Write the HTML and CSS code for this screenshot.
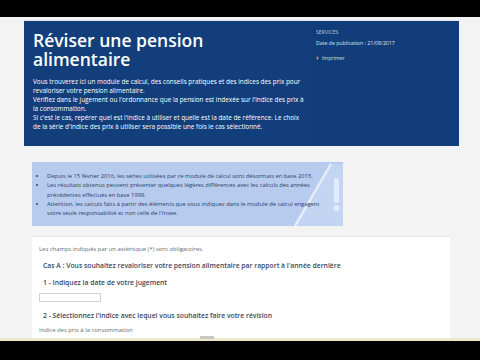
FILE: index.html
```html
<!DOCTYPE html>
<html>
<head>
  <title>Réviser une pension alimentaire</title>
  <link rel="stylesheet" href="styles.css">
</head>
<body>
  <div class="frame">
    <div class="letterbox"></div>
    <div class="page">
      <div class="header">
        <div class="intro">
          <h1>Réviser une pension alimentaire</h1>
          <p>Vous trouverez ici un module de calcul, des conseils pratiques et des indices des prix pour revaloriser votre pension alimentaire.</p>
          <p>Vérifiez dans le jugement ou l'ordonnance que la pension est indexée sur l'indice des prix à la consommation.</p>
          <p>Si c'est le cas, repérer quel est l'indice à utiliser et quelle est la date de référence. Le choix de la série d'indice des prix à utiliser sera possible une fois le cas sélectionné.</p>
        </div>
        <div class="services">
          <div class="services-title">SERVICES</div>
          <div class="services-date">Date de publication : 21/08/2017</div>
          <div class="services-print"><span class="chevron">›</span> Imprimer</div>
        </div>
      </div>

      <div class="notice">
        <ul>
          <li>Depuis le 15 février 2016, les séries utilisées par ce module de calcul sont désormais en base 2015.</li>
          <li>Les résultats obtenus peuvent présenter quelques légères différences avec les calculs des années précédentes effectués en base 1998.</li>
          <li>Attention, les calculs faits à partir des éléments que vous indiquez dans le module de calcul engagent votre seule responsabilité et non celle de l'Insee.</li>
        </ul>
        <svg class="warn" width="60" height="64" viewBox="0 0 60 64">
          <polygon points="12,64 48,2 60,2 60,64" fill="#c3d5f3"/>
          <line x1="12" y1="64" x2="48" y2="2" stroke="#e4ecfa" stroke-width="2.5"/>
          <rect x="51" y="16" width="5" height="25" rx="2" fill="#e4ecfa"/>
          <circle cx="53.5" cy="46" r="3" fill="#e4ecfa"/>
        </svg>
      </div>

      <div class="form">
        <p class="mandatory">Les champs indiqués par un astérisque (*) sont obligatoires.</p>
        <h2>Cas A : Vous souhaitez revaloriser votre pension alimentaire par rapport à l'année dernière</h2>
        <h3>1 - Indiquez la date de votre jugement</h3>
        <input type="text" class="date-input">
        <h3>2 - Sélectionnez l'indice avec lequel vous souhaitez faire votre révision</h3>
        <p class="index-label">Indice des prix à la consommation</p>
      </div>
    </div>
    <div class="progress"><span class="handle"></span></div>
    <div class="letterbox bottom"></div>
  </div>
</body>
</html>
```

FILE: styles.css
```css
body {
  margin: 0;
  background-color: #000;
  font-family: "Open Sans", Arial, sans-serif;
}
.frame {
  width: 480px;
  height: 360px;
  display: flex;
  flex-direction: column;
  overflow: hidden;
}
.letterbox {
  height: 17px;
  background-color: #000;
  flex-shrink: 0;
}
.letterbox.bottom {
  flex: 1;
}
.page {
  height: 321px;
  background-color: #f3f3f4;
  overflow: hidden;
  display: flex;
  flex-direction: column;
  align-items: flex-start;
}
.header {
  margin: 3px 0 0 24px;
  width: 435px;
  height: 126px;
  background-color: #123f7c;
  border-top: 1px solid #dfe6f0;
  box-sizing: border-box;
  display: flex;
  color: #ffffff;
}
.intro {
  width: 284px;
  padding: 10px 0 0 9px;
  box-sizing: border-box;
}
h1 {
  margin: 0 0 9px 0;
  max-width: 200px;
  font-size: 17.5px;
  font-weight: 600;
  line-height: 19px;
}
.intro p {
  margin: 0 0 0.5px 0;
  font-size: 6.4px;
  line-height: 8.8px;
}
.services {
  flex: 1;
  background-color: #113d7a;
  padding: 7px 0 0 8px;
  font-size: 5.2px;
  color: #dfe5ef;
}
.services-title {
  color: #b9c5d8;
  margin-bottom: 3px;
}
.services-print {
  margin-top: 6px;
  color: #d7e4c6;
}
.chevron {
  color: #f0c020;
  font-weight: 700;
  font-size: 7px;
  margin-right: 2px;
}
.notice {
  position: relative;
  margin: 16px 0 0 32px;
  width: 311px;
  height: 64px;
  background-color: #b7cbee;
  box-sizing: border-box;
  overflow: hidden;
}
.notice ul {
  position: relative;
  z-index: 1;
  margin: 0;
  padding: 10px 20px 0 15px;
  font-size: 5.8px;
  line-height: 9.3px;
  color: #2e4066;
}
.warn {
  position: absolute;
  right: 0;
  top: 0;
}
.form {
  margin: 10px 0 0 32px;
  width: 418px;
  flex: 1;
  background-color: #ffffff;
  border-top: 1px solid #e6e6e8;
  box-sizing: border-box;
  padding: 8px 0 0 7px;
}
.mandatory {
  margin: 0 0 8px 0;
  font-size: 5.9px;
  color: #666a72;
}
h2, h3 {
  margin: 0 0 8px 4px;
  font-size: 6.8px;
  font-weight: 600;
  color: #3a475e;
}
h3 {
  margin-bottom: 6px;
}
.date-input {
  display: block;
  width: 62px;
  height: 9px;
  box-sizing: border-box;
  border: 1px solid #cfd2d6;
  margin: 0 0 9px 0;
  padding: 0;
}
.index-label {
  margin: 2px 0 0 0;
  font-size: 5.9px;
  color: #666a72;
}
.progress {
  position: relative;
  height: 3px;
  background-color: #ece9c9;
  flex-shrink: 0;
}
.handle {
  position: absolute;
  left: 200px;
  top: -2px;
  width: 14px;
  height: 3px;
  background-color: #c8c8c8;
}
```
